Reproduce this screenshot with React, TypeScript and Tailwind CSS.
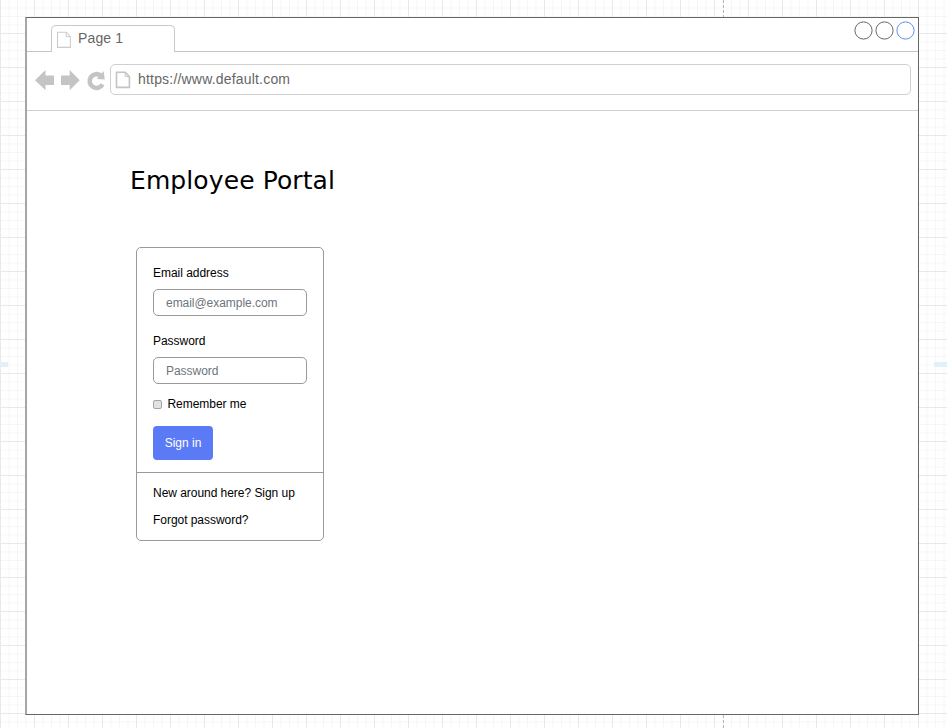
import React from "react";

const gridStyle =
  "bg-[linear-gradient(to_right,#e9e9e9_1px,transparent_1px),linear-gradient(to_bottom,#e9e9e9_1px,transparent_1px),linear-gradient(to_right,#f6f6f6_1px,transparent_1px),linear-gradient(to_bottom,#f6f6f6_1px,transparent_1px)] bg-[size:34px_34px,34px_34px,8.5px_8.5px,8.5px_8.5px] bg-[position:0px_0px,0px_-1px,0px_0px,0px_-1px]";

function PageIcon({ thin }: { thin?: boolean }) {
  return (
    <svg className="shrink-0" width="16" height="18" viewBox="0 0 16 18" fill="none" stroke={thin ? "#cccccc" : "#c4c4c4"} strokeWidth={thin ? 1.1 : 1.6}>
      <path d="M1.5 1.2H10.2L14.4 5.6V16.4H1.5Z" />
      <path d="M10.2 1.2V5.6H14.4" strokeWidth="1" />
    </svg>
  );
}

function Field({ label, placeholder }: { label: string; placeholder: string }) {
  return (
    <label className="block h-[68px]">
      <span className="block h-[24px] leading-[16px] tracking-[-0.03px]">{label}</span>
      <span className="flex h-[27px] w-[154px] items-center rounded-[5px] border border-[#999] pl-3 tracking-[-0.04px] text-[#6c757d]">
        {placeholder}
      </span>
    </label>
  );
}

export default function App() {
  return (
    <div className={`relative h-[728px] w-[947px] overflow-hidden bg-white pt-[17px] pl-[25px] font-['Liberation_Sans',Arial,sans-serif] ${gridStyle}`}>
      <div className="absolute top-0 left-[723px] h-full border-l border-dashed border-[#b8b8b8]" />
      <div className="absolute top-[362px] left-0 h-[5px] w-[8px] bg-[#e2f0fa]" />
      <div className="absolute top-[362px] right-0 h-[5px] w-[13px] bg-[#e2f0fa]" />

      <main className="relative flex h-[698px] w-[894px] flex-col border border-l-2 border-[#666] border-l-[#a6a6a6] bg-white">
        <header className="flex h-[34px] items-end">
          <div className="h-full w-[24px] border-b border-[#c4c4c4]" />
          <div className="flex h-[27px] w-[124px] rounded-t-[5px] border border-b-0 border-[#c8c8c8] pt-[5px] pl-[4px] text-[14px] leading-[15px] text-[#666]">
            <PageIcon thin />
            <span className="ml-[6px] tracking-[0.15px]">Page 1</span>
          </div>
          <div className="flex h-full flex-1 justify-end gap-[2.3px] border-b border-[#c4c4c4] pt-[2.5px] pr-[2.6px]">
            {["#666666", "#666666", "#5b8def"].map((c, i) => (
              <svg key={i} width="19" height="19" viewBox="0 0 19 19" fill="none" stroke={c}>
                <circle cx="9.5" cy="9.5" r="8.6" />
              </svg>
            ))}
          </div>
        </header>

        <nav className="flex h-[59px] items-start border-b border-[#d0d0d0] pt-[12px] pl-[8px]">
          <svg className="mt-[5px]" width="75" height="22" viewBox="35 69 75 22" fill="#c4c4c4">
            <path d="M35 80.2L45.5 70V75.5H54V85H45.5V90.3Z" />
            <path d="M79.7 80.2L69.7 70V75.5H61V85H69.7V90.3Z" />
            <path d="M102.6 84.4A6.9 6.9 0 1 1 100.8 75.6" fill="none" stroke="#c4c4c4" strokeWidth="4.6" />
            <path d="M103.6 71L104.8 79.6L96.8 79Z" />
          </svg>
          <div className="flex h-[31px] w-[801px] items-center rounded-[5px] border border-[#cfcfcf] pl-[4px] text-[14px] text-[#666]">
            <PageIcon />
            <span className="ml-[7px] tracking-[0.19px]">https://www.default.com</span>
          </div>
        </nav>

        <section className="pt-[53px] pl-[103px]">
          <h1 className="h-[83px] font-['DejaVu_Sans',Verdana,sans-serif] text-[25px] leading-[33px] tracking-[0.1px] text-black">
            Employee Portal
          </h1>
          <form className="ml-[6px] flex h-[294px] w-[188px] flex-col rounded-[5px] border border-[#999] text-[12px] leading-[16px] text-black">
            <div className="h-[225px] border-b border-[#999] pt-[17px] pl-[16px]">
              <Field label="Email address" placeholder="email@example.com" />
              <Field label="Password" placeholder="Password" />
              <div className="-mt-[5px] flex h-[30px] items-start">
                <span className="mt-[4px] mr-[5.5px] h-[9px] w-[9px] rounded-[2px] border border-[#a5a5a5] bg-[#e2e2e2]" />
                <span className="tracking-[-0.05px]">Remember me</span>
              </div>
              <button type="button" className="-mt-[0.5px] flex h-[34px] w-[60px] items-center justify-center rounded-[4px] bg-[#5b7af5] text-white">
                Sign in
              </button>
            </div>
            <div className="flex flex-col gap-[11px] pt-[12px] pl-[16px] tracking-[-0.04px]">
              <a>New around here? Sign up</a>
              <a>Forgot password?</a>
            </div>
          </form>
        </section>
      </main>
    </div>
  );
}
